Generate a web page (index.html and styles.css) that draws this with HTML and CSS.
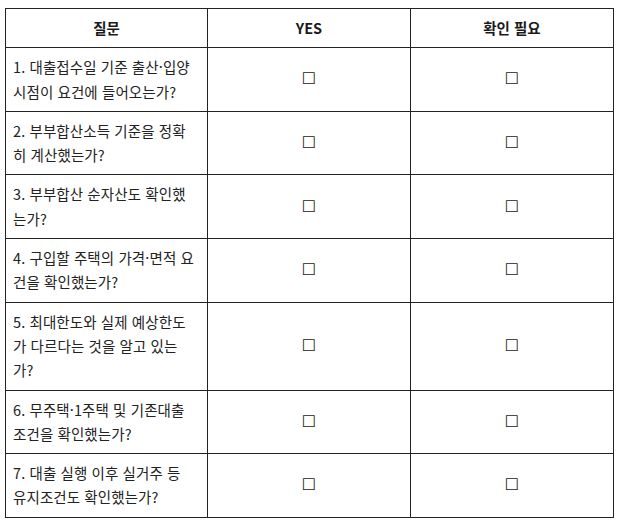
FILE: index.html
```html
<!DOCTYPE html>
<html lang="ko">
<head>
<meta charset="utf-8">
<title>체크리스트</title>
<link rel="stylesheet" href="styles.css">
</head>
<body>
<table class="checklist">
  <colgroup>
    <col class="col-q">
    <col class="col-yes">
    <col class="col-need">
  </colgroup>
  <thead>
    <tr>
      <th>질문</th>
      <th>YES</th>
      <th>확인 필요</th>
    </tr>
  </thead>
  <tbody>
    <tr>
      <td class="q">1. 대출접수일 기준 출산·입양<br>시점이 요건에 들어오는가?</td>
      <td class="box">☐</td>
      <td class="box">☐</td>
    </tr>
    <tr>
      <td class="q">2. 부부합산소득 기준을 정확<br>히 계산했는가?</td>
      <td class="box">☐</td>
      <td class="box">☐</td>
    </tr>
    <tr>
      <td class="q">3. 부부합산 순자산도 확인했<br>는가?</td>
      <td class="box">☐</td>
      <td class="box">☐</td>
    </tr>
    <tr>
      <td class="q">4. 구입할 주택의 가격·면적 요<br>건을 확인했는가?</td>
      <td class="box">☐</td>
      <td class="box">☐</td>
    </tr>
    <tr>
      <td class="q">5. 최대한도와 실제 예상한도<br>가 다르다는 것을 알고 있는<br>가?</td>
      <td class="box">☐</td>
      <td class="box">☐</td>
    </tr>
    <tr>
      <td class="q">6. 무주택·1주택 및 기존대출<br>조건을 확인했는가?</td>
      <td class="box">☐</td>
      <td class="box">☐</td>
    </tr>
    <tr>
      <td class="q">7. 대출 실행 이후 실거주 등<br>유지조건도 확인했는가?</td>
      <td class="box">☐</td>
      <td class="box">☐</td>
    </tr>
  </tbody>
</table>
</body>
</html>
```

FILE: styles.css
```css
html, body {
  background: #ffffff;
}
body {
  margin: 8px 0 0 5px;
  font-family: "Noto Sans CJK KR", "Noto Sans", sans-serif;
  font-size: 14.5px;
  color: #222222;
}
.checklist {
  width: 608px;
  border-collapse: collapse;
  table-layout: fixed;
}
.col-q { width: 202px; }
.col-yes { width: 203px; }
.col-need { width: 203px; }
.checklist th,
.checklist td {
  border: 1px solid #222222;
  padding: 7px 7px;
  line-height: 24.3px;
  vertical-align: middle;
}
.checklist th {
  font-weight: 700;
  text-align: center;
  color: #1a1a1a;
}
.checklist td.q {
  text-align: left;
  letter-spacing: 0.1px;
  white-space: nowrap;
}
.checklist td.box {
  text-align: center;
  font-family: "DejaVu Sans", sans-serif;
  font-size: 16px;
  color: #222222;
}
```
